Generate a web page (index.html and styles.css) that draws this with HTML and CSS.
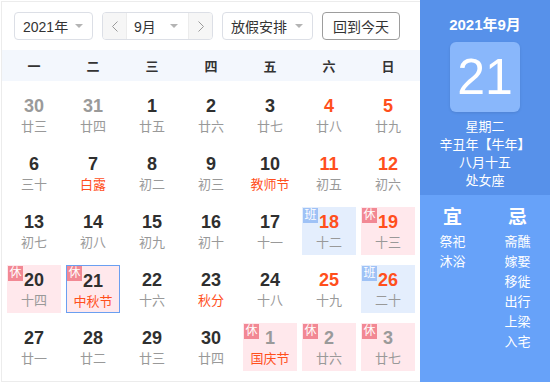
FILE: index.html
```html
<!DOCTYPE html>
<html lang="zh-CN">
<head>
    <meta charset="UTF-8">
    <link rel="stylesheet" href="styles.css">
    <title>万年历</title>
</head>
<body>
    <div class="calendar">
        <div class="main">
            <div class="toolbar">
                <div class="select year-select">
                    <span>2021年</span>
                    <i class="caret"></i>
                </div>
                <div class="month-group">
                    <div class="nav-btn">
                        <svg width="6" height="11" viewBox="0 0 6 11"><polyline points="5.5,0.5 0.5,5.5 5.5,10.5" fill="none" stroke="#9a9a9a" stroke-width="1"/></svg>
                    </div>
                    <div class="month-select">
                        <span>9月</span>
                        <i class="caret"></i>
                    </div>
                    <div class="nav-btn">
                        <svg width="6" height="11" viewBox="0 0 6 11"><polyline points="0.5,0.5 5.5,5.5 0.5,10.5" fill="none" stroke="#9a9a9a" stroke-width="1"/></svg>
                    </div>
                </div>
                <div class="select holiday-select">
                    <span>放假安排</span>
                    <i class="caret"></i>
                </div>
                <button class="today-btn">回到今天</button>
            </div>

            <div class="weekdays">
                <div>一</div>
                <div>二</div>
                <div>三</div>
                <div>四</div>
                <div>五</div>
                <div>六</div>
                <div>日</div>
            </div>

            <div class="days" id="days"></div>
        </div>

        <div class="side">
            <div class="side-top">
                <div class="side-title">2021年9月</div>
                <div class="side-day">21</div>
                <div class="side-info">
                    <div>星期二</div>
                    <div>辛丑年【牛年】</div>
                    <div>八月十五</div>
                    <div>处女座</div>
                </div>
            </div>
            <div class="side-bottom">
                <div class="yiji">
                    <div class="yiji-head">宜</div>
                    <div>祭祀</div>
                    <div>沐浴</div>
                </div>
                <div class="yiji">
                    <div class="yiji-head">忌</div>
                    <div>斋醮</div>
                    <div>嫁娶</div>
                    <div>移徙</div>
                    <div>出行</div>
                    <div>上梁</div>
                    <div>入宅</div>
                </div>
            </div>
        </div>
    </div>

    <script>
        // day, lunar text, flags: o = other month, w = weekend, f = festival, r = rest, b = work, s = selected
        const days = [
            [30, '廿三', 'o'], [31, '廿四', 'o'], [1, '廿五', ''], [2, '廿六', ''], [3, '廿七', ''], [4, '廿八', 'w'], [5, '廿九', 'w'],
            [6, '三十', ''], [7, '白露', 'f'], [8, '初二', ''], [9, '初三', ''], [10, '教师节', 'f'], [11, '初五', 'w'], [12, '初六', 'w'],
            [13, '初七', ''], [14, '初八', ''], [15, '初九', ''], [16, '初十', ''], [17, '十一', ''], [18, '十二', 'wb'], [19, '十三', 'wr'],
            [20, '十四', 'r'], [21, '中秋节', 'frs'], [22, '十六', ''], [23, '秋分', 'f'], [24, '十八', ''], [25, '十九', 'w'], [26, '二十', 'wb'],
            [27, '廿一', ''], [28, '廿二', ''], [29, '廿三', ''], [30, '廿四', ''], [1, '国庆节', 'ofr'], [2, '廿六', 'or'], [3, '廿七', 'or']
        ];

        const daysEl = document.getElementById('days');

        days.forEach(([num, lunar, flags]) => {
            const cell = document.createElement('div');
            cell.className = 'day';
            if (flags.includes('o')) cell.classList.add('other');
            if (flags.includes('w')) cell.classList.add('weekend');
            if (flags.includes('r')) cell.classList.add('rest');
            if (flags.includes('b')) cell.classList.add('work');
            if (flags.includes('s')) cell.classList.add('selected');

            let html = '';
            if (flags.includes('r')) html += '<span class="badge">休</span>';
            if (flags.includes('b')) html += '<span class="badge">班</span>';
            html += '<div class="num">' + num + '</div>';
            html += '<div class="lunar' + (flags.includes('f') ? ' festival' : '') + '">' + lunar + '</div>';
            cell.innerHTML = html;
            daysEl.appendChild(cell);
        });
    </script>
</body>
</html>
```

FILE: styles.css
```css
body {
    margin: 0;
    font-family: "Liberation Sans", "Noto Sans CJK SC", sans-serif;
    color: #333;
    background: #fff;
}

.calendar {
    display: flex;
    width: 550px;
    height: 382px;
}

.main {
    width: 419px;
    height: 381px;
    margin: 1px 0 0 1px;
    box-sizing: border-box;
    border: 1px solid #ececec;
    border-right: none;
}

/* toolbar */
.toolbar {
    display: flex;
    gap: 9px;
    padding: 10px 0 0 12px;
    height: 28px;
}

.select,
.month-group {
    display: flex;
    flex: none;
    align-items: center;
    height: 28px;
    box-sizing: border-box;
    border: 1px solid #dcdfe6;
    border-radius: 4px;
    font-size: 14px;
    color: #333;
}

.select {
    justify-content: space-between;
    padding: 0 9px 0 8px;
}

.year-select {
    width: 79px;
}

.holiday-select {
    width: 91px;
}

.caret {
    width: 0;
    height: 0;
    border-left: 4px solid transparent;
    border-right: 4px solid transparent;
    border-top: 4px solid #b4b4b4;
}

.month-group {
    width: 111px;
    overflow: hidden;
}

.nav-btn {
    width: 23px;
    height: 100%;
    background: #f6f6f6;
    display: flex;
    align-items: center;
    justify-content: center;
}

.month-select {
    flex: 1;
    height: 100%;
    display: flex;
    align-items: center;
    justify-content: space-between;
    padding: 0 10px 0 7px;
    border-left: 1px solid #ececec;
    border-right: 1px solid #ececec;
}

.today-btn {
    flex: none;
    width: 78px;
    height: 28px;
    padding: 0;
    border: 1px solid #9d9d9d;
    border-radius: 4px;
    background: #fff;
    font-family: inherit;
    font-size: 14px;
    color: #333;
}

/* weekday header */
.weekdays {
    display: grid;
    grid-template-columns: repeat(7, 54px);
    column-gap: 5px;
    padding: 0 5px;
    margin-top: 10px;
    height: 31px;
    align-items: center;
    background: #f3f7fd;
    font-size: 13px;
    font-weight: bold;
    color: #333;
    text-align: center;
}

/* day grid */
.days {
    display: grid;
    grid-template-columns: repeat(7, 54px);
    grid-auto-rows: 48px;
    gap: 10px 5px;
    padding: 10px 5px 0 5px;
}

.day {
    position: relative;
    box-sizing: border-box;
    text-align: center;
}

.day .num {
    padding-top: 4px;
    line-height: 22px;
    font-size: 18px;
    font-weight: bold;
    color: #2f2f2f;
}

.day .lunar {
    margin-top: 2px;
    line-height: 16px;
    font-size: 13px;
    color: #999;
}

.day .lunar.festival {
    color: #ff4f1c;
}

.day.weekend .num {
    color: #ff4f1c;
}

.day.other .num {
    color: #9a9a9a;
}

.day.rest {
    background: #ffe8ec;
}

.day.work {
    background: #e4eefd;
}

.day.selected {
    border: 1px solid #6a9ff1;
}

.badge {
    position: absolute;
    top: 1px;
    left: 1px;
    width: 15px;
    height: 15px;
    line-height: 15px;
    font-size: 12px;
    color: #fff;
    text-align: center;
    background: #f28894;
}

.work .badge {
    background: #9fc2f6;
}

.selected .badge {
    top: 0;
    left: 0;
}

/* side panel */
.side {
    width: 130px;
    height: 382px;
    display: flex;
    flex-direction: column;
    color: #fff;
    text-align: center;
}

.side-top {
    background: #5791ea;
    padding: 14px 0 6px;
    height: 195px;
    box-sizing: border-box;
}

.side-title {
    line-height: 22px;
    font-size: 15px;
    font-weight: bold;
}

.side-day {
    width: 70px;
    height: 70px;
    margin: 6px auto 0;
    border-radius: 6px;
    background: #89b7fb;
    box-shadow: 0 1px 3px rgba(0, 0, 0, 0.1);
    line-height: 70px;
    font-size: 50px;
}

.side-info {
    margin-top: 6px;
    line-height: 18px;
    font-size: 13px;
}

.side-bottom {
    flex: 1;
    display: flex;
    background: #67a2f9;
    padding-top: 11px;
}

.yiji {
    flex: 1;
    line-height: 20px;
    font-size: 13px;
}

.yiji-head {
    line-height: 24px;
    font-size: 19px;
    font-weight: bold;
    margin-bottom: 2px;
}
```
